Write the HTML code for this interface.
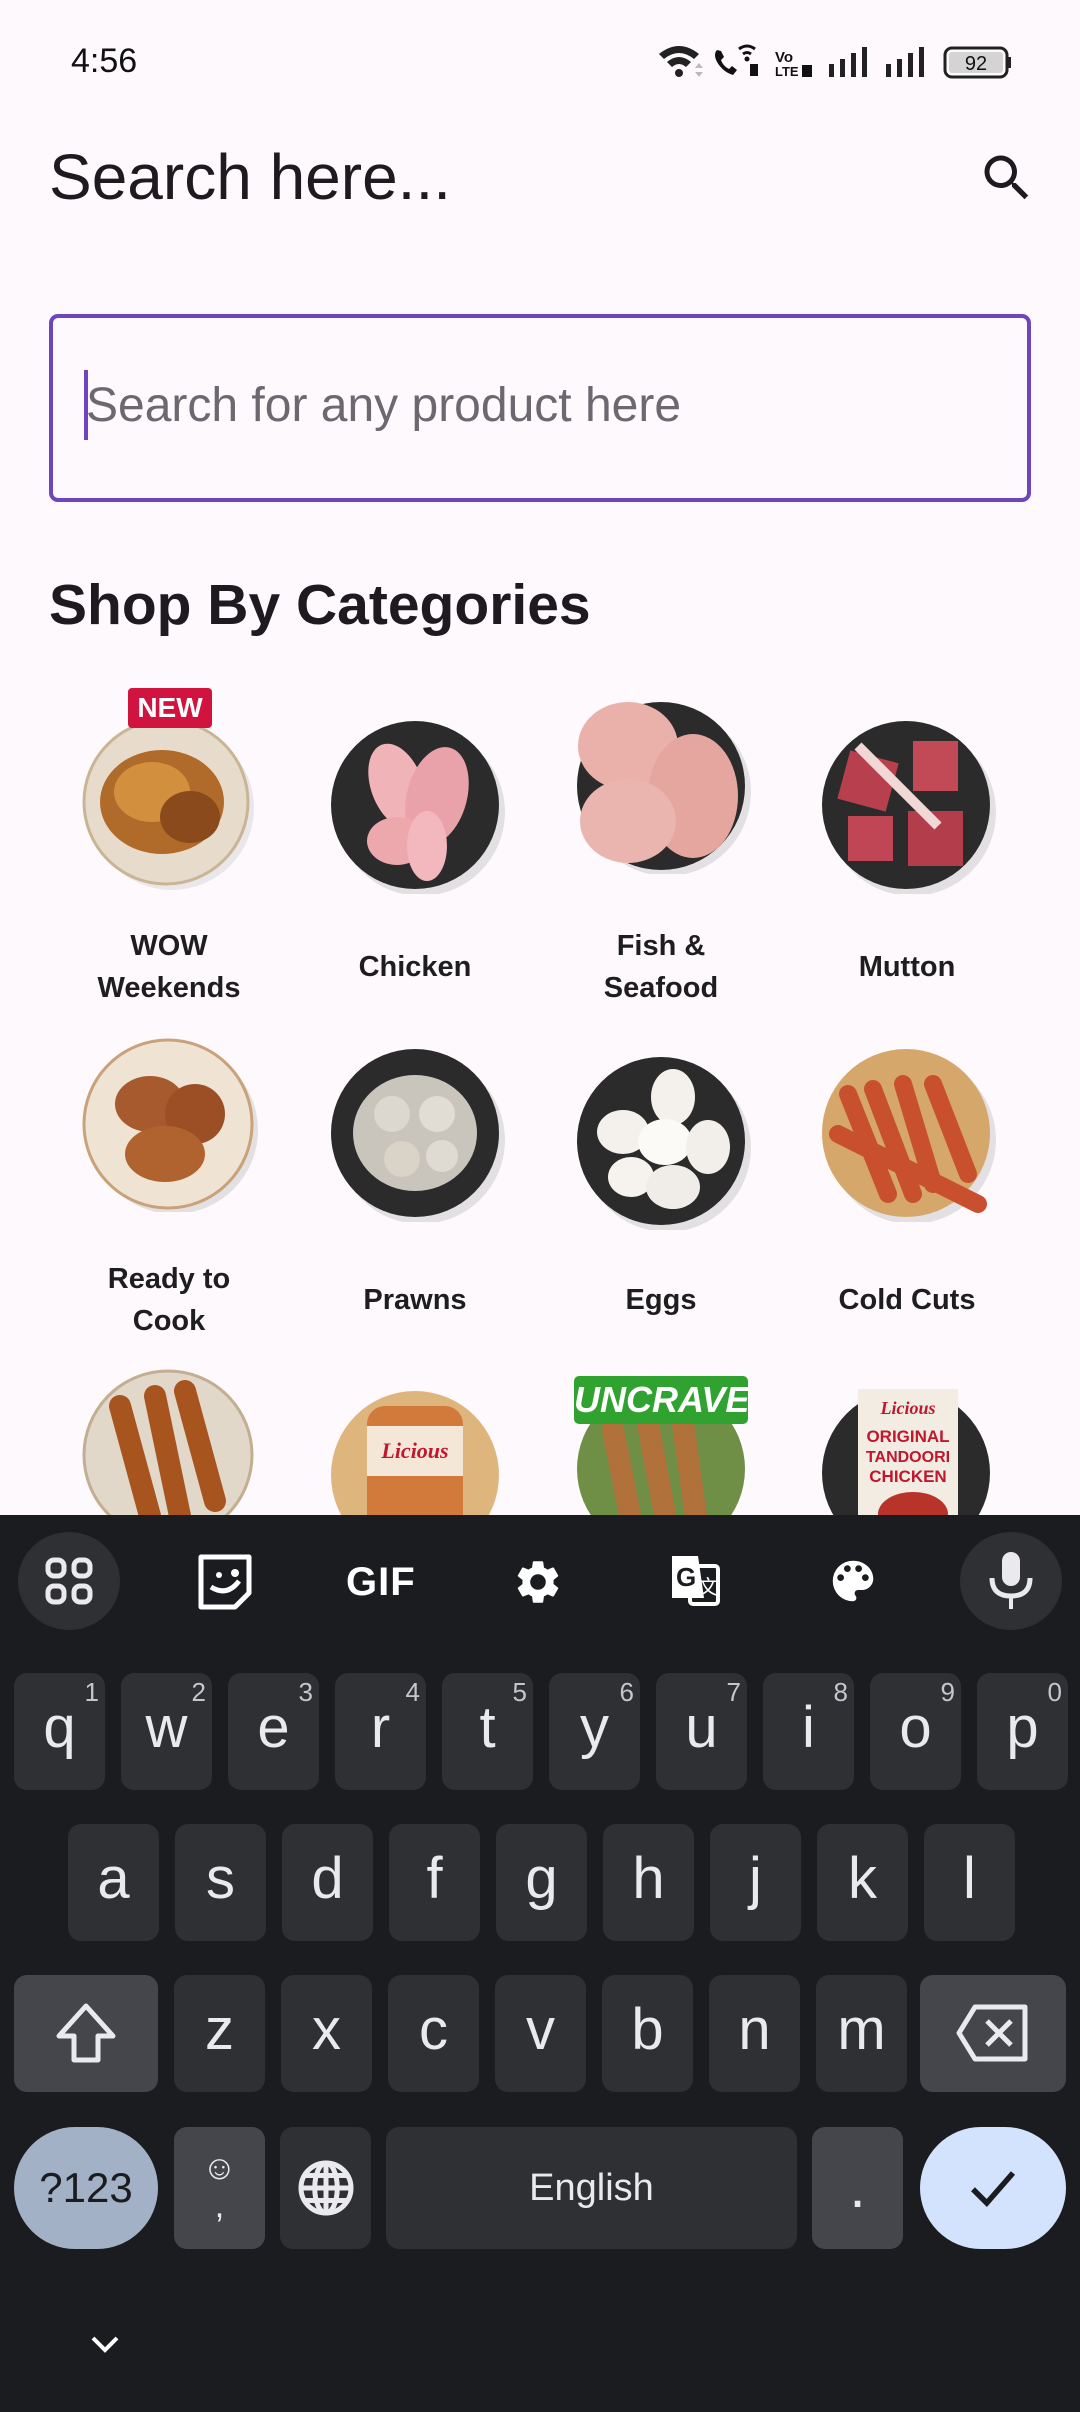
<!DOCTYPE html>
<html><head><meta charset="utf-8"><style>
*{margin:0;padding:0;box-sizing:border-box}
body{width:1080px;height:2412px;background:#fef9fd;font-family:"Liberation Sans",sans-serif;position:relative;overflow:hidden}
.a{position:absolute}
.lbl{position:absolute;width:246px;text-align:center;font-weight:bold;font-size:29px;color:#1e1e1e;line-height:42px}
.plate{position:absolute;width:178px;height:178px}
.kb{position:absolute;left:0;top:1515px;width:1080px;height:897px;background:#1b1c1f}
.k{position:absolute;background:#2f3034;border-radius:13px;color:#e9e9ee;font-size:58px;text-align:center;line-height:110px;height:117px;width:91px}
.k sup{position:absolute;right:6px;top:4px;font-size:26px;line-height:30px;color:#c4c6cc}
.d{background:#45464b}
</style></head><body>
<!-- status bar -->
<div class="a" style="left:71px;top:42px;font-size:34px;color:#111">4:56</div>
<svg class="a" style="left:655px;top:40px" width="360" height="42" viewBox="0 0 360 42">
<path d="M4 14 Q24 -2 44 14 L39 19 Q24 7 9 19Z M12 22 Q24 12 36 22 L31 27 Q24 21 17 27Z" fill="#222"/><circle cx="24" cy="33" r="4" fill="#222"/>
<path d="M40 28 l4-5 l4 5z M40 32 l4 5 l4-5z" fill="#bbb"/>
<path d="M62 10 q-4 4 0 12 q6 10 16 13 l4-5 l-5-4 l-3 3 q-6-3-8-9 l3-3 l-3-6z" fill="#111"/>
<path d="M84 9 q8-6 16 0 M88 14 q4-3 8 0" stroke="#111" stroke-width="3" fill="none"/><circle cx="92" cy="19" r="2.5" fill="#111"/>
<rect x="95" y="24" width="8" height="12" fill="#111"/>
<text x="120" y="22" font-size="15" font-weight="bold" fill="#111" font-family="Liberation Sans">Vo</text>
<text x="120" y="36" font-size="13" font-weight="bold" fill="#111" font-family="Liberation Sans">LTE</text>
<rect x="147" y="25" width="10" height="12" fill="#111"/>
<rect x="174" y="24" width="5" height="13" fill="#222"/><rect x="185" y="19" width="5" height="18" fill="#222"/><rect x="196" y="13" width="5" height="24" fill="#222"/><rect x="207" y="7" width="5" height="30" fill="#222"/>
<rect x="231" y="24" width="5" height="13" fill="#222"/><rect x="242" y="19" width="5" height="18" fill="#222"/><rect x="253" y="13" width="5" height="24" fill="#222"/><rect x="264" y="7" width="5" height="30" fill="#222"/>
<rect x="290" y="8" width="62" height="29" rx="7" fill="none" stroke="#222" stroke-width="3"/><rect x="294" y="12" width="54" height="21" rx="3" fill="#d4d4d4"/>
<text x="321" y="30" font-size="20" fill="#111" text-anchor="middle" font-family="Liberation Sans">92</text><rect x="353" y="17" width="3" height="11" fill="#222"/>
</svg>
<!-- header -->
<div class="a" style="left:49px;top:140px;font-size:64px;color:#1d1b20">Search here...</div>
<svg class="a" style="left:977px;top:148px" width="60" height="60" viewBox="0 0 24 24"><path fill="#1d1b20" d="M15.5 14h-.79l-.28-.27A6.47 6.47 0 0016 9.5 6.5 6.5 0 109.5 16c1.61 0 3.09-.59 4.23-1.57l.27.28v.79l5 4.99L20.49 19l-4.99-5zm-6 0C7.01 14 5 11.99 5 9.5S7.01 5 9.5 5 14 7.01 14 9.5 11.99 14 9.5 14z"/></svg>
<div class="a" style="left:49px;top:314px;width:982px;height:188px;border:4px solid #6f45bd;border-radius:9px"></div>
<div class="a" style="left:84px;top:370px;width:4px;height:70px;background:#6f45bd"></div>
<div class="a" style="left:86px;top:378px;font-size:48px;color:#6b6870">Search for any product here</div>
<div class="a" style="left:49px;top:572px;font-size:57px;font-weight:bold;color:#1d1b20">Shop By Categories</div>
<!-- row1 -->
<svg class="plate" style="left:80px;top:712px" viewBox="0 0 178 178"><ellipse cx="92" cy="96" rx="82" ry="82" fill="#ccc" opacity=".4"/><circle cx="86" cy="90" r="82" fill="#e7dccb" stroke="#c9b595" stroke-width="3"/><ellipse cx="82" cy="90" rx="62" ry="52" fill="#b06a2a"/><ellipse cx="72" cy="80" rx="38" ry="30" fill="#d2903e"/><ellipse cx="110" cy="105" rx="30" ry="26" fill="#8a4a1c"/></svg>
<div class="a" style="left:128px;top:688px;width:84px;height:40px;background:#d0143f;border-radius:4px;color:#fff;font-weight:bold;font-size:28px;text-align:center;line-height:40px">NEW</div>
<svg class="plate" style="left:327px;top:716px" viewBox="0 0 178 178"><circle cx="94" cy="96" r="84" fill="#bbb" opacity=".4"/><circle cx="88" cy="89" r="84" fill="#2b2b2b"/><ellipse cx="70" cy="70" rx="26" ry="44" fill="#f0b3b8" transform="rotate(-20 70 70)"/><ellipse cx="110" cy="80" rx="30" ry="50" fill="#e9a2aa" transform="rotate(15 110 80)"/><ellipse cx="70" cy="125" rx="30" ry="24" fill="#eda8ae"/><ellipse cx="100" cy="130" rx="20" ry="35" fill="#f2b8bd"/></svg>
<svg class="plate" style="left:573px;top:696px" viewBox="0 0 178 178"><circle cx="94" cy="96" r="84" fill="#bbb" opacity=".4"/><circle cx="88" cy="90" r="84" fill="#2b2b2b"/><ellipse cx="55" cy="50" rx="50" ry="44" fill="#e9b1aa"/><ellipse cx="120" cy="100" rx="45" ry="62" fill="#e5a69f"/><ellipse cx="55" cy="125" rx="48" ry="42" fill="#eab5ae"/></svg>
<svg class="plate" style="left:818px;top:716px" viewBox="0 0 178 178"><circle cx="94" cy="96" r="84" fill="#bbb" opacity=".4"/><circle cx="88" cy="89" r="84" fill="#2b2b2b"/><rect x="25" y="40" width="50" height="50" fill="#b8404e" transform="rotate(15 50 65)"/><rect x="95" y="25" width="45" height="50" fill="#c24a57"/><rect x="30" y="100" width="45" height="45" fill="#c04655"/><rect x="90" y="95" width="55" height="55" fill="#b33d4b"/><path d="M40 30 L120 110" stroke="#f1d7d5" stroke-width="10"/></svg>
<div class="lbl" style="left:46px;top:925px">WOW<br>Weekends</div>
<div class="lbl" style="left:292px;top:946px">Chicken</div>
<div class="lbl" style="left:538px;top:925px">Fish &amp;<br>Seafood</div>
<div class="lbl" style="left:784px;top:946px">Mutton</div>
<!-- row2 -->
<svg class="plate" style="left:80px;top:1034px" viewBox="0 0 178 178"><circle cx="94" cy="96" r="84" fill="#bbb" opacity=".4"/><circle cx="88" cy="90" r="84" fill="#efe3d3" stroke="#c9a27a" stroke-width="3"/><ellipse cx="70" cy="70" rx="35" ry="28" fill="#a65a2e"/><ellipse cx="115" cy="80" rx="30" ry="30" fill="#9c4f25"/><ellipse cx="85" cy="120" rx="40" ry="28" fill="#b0622f"/></svg>
<svg class="plate" style="left:327px;top:1044px" viewBox="0 0 178 178"><circle cx="94" cy="96" r="84" fill="#bbb" opacity=".4"/><circle cx="88" cy="89" r="84" fill="#2b2b2b"/><ellipse cx="88" cy="89" rx="62" ry="58" fill="#c9c5bd"/><circle cx="65" cy="70" r="18" fill="#ddd8cf"/><circle cx="110" cy="70" r="18" fill="#e2ddd4"/><circle cx="75" cy="115" r="18" fill="#d9d3c8"/><circle cx="115" cy="112" r="16" fill="#e0dbd2"/></svg>
<svg class="plate" style="left:573px;top:1052px" viewBox="0 0 178 178"><circle cx="94" cy="96" r="84" fill="#bbb" opacity=".4"/><circle cx="88" cy="89" r="84" fill="#2b2b2b"/><ellipse cx="100" cy="45" rx="22" ry="28" fill="#f4f1ec"/><ellipse cx="50" cy="80" rx="26" ry="22" fill="#f4f1ec"/><ellipse cx="92" cy="90" rx="27" ry="23" fill="#fbfaf7"/><ellipse cx="135" cy="95" rx="22" ry="27" fill="#f2efea"/><ellipse cx="58" cy="125" rx="23" ry="20" fill="#f6f3ee"/><ellipse cx="100" cy="135" rx="27" ry="22" fill="#f0ede8"/></svg>
<svg class="plate" style="left:818px;top:1044px" viewBox="0 0 178 178"><circle cx="94" cy="96" r="84" fill="#bbb" opacity=".4"/><circle cx="88" cy="89" r="84" fill="#d6a76a"/><g stroke="#c9502e" stroke-width="18" stroke-linecap="round"><path d="M30 50 L70 150"/><path d="M55 45 L95 150"/><path d="M85 40 L115 140"/><path d="M115 40 L150 130"/><path d="M20 90 L160 160"/></g></svg>
<div class="lbl" style="left:46px;top:1258px">Ready to<br>Cook</div>
<div class="lbl" style="left:292px;top:1279px">Prawns</div>
<div class="lbl" style="left:538px;top:1279px">Eggs</div>
<div class="lbl" style="left:784px;top:1279px">Cold Cuts</div>
<!-- row3 -->
<svg class="plate" style="left:80px;top:1366px" viewBox="0 0 178 178"><circle cx="88" cy="89" r="84" fill="#e2d8c9" stroke="#c2ae90" stroke-width="3"/><g stroke="#a8541f" stroke-width="22" stroke-linecap="round"><path d="M40 40 L70 150"/><path d="M75 30 L100 150"/><path d="M105 25 L135 135"/></g></svg>
<svg class="plate" style="left:327px;top:1386px" viewBox="0 0 178 178"><circle cx="88" cy="89" r="84" fill="#dfb57e"/><rect x="40" y="20" width="96" height="140" rx="18" fill="#d27a3c"/><rect x="40" y="40" width="96" height="50" fill="#f5e7d8"/><text x="88" y="72" font-size="22" font-style="italic" font-weight="bold" fill="#c0172e" text-anchor="middle" font-family="Liberation Serif">Licious</text></svg>
<svg class="plate" style="left:573px;top:1380px" viewBox="0 0 178 178"><circle cx="88" cy="89" r="84" fill="#6e8f45"/><g stroke="#b0713a" stroke-width="22" stroke-linecap="round"><path d="M40 50 L60 150"/><path d="M75 45 L95 150"/><path d="M110 45 L125 150"/></g></svg>
<div class="a" style="left:574px;top:1376px;width:174px;height:48px;background:#2fa22f;border-radius:5px;color:#fff;font-weight:bold;font-size:36px;text-align:center;line-height:48px;font-style:italic">UNCRAVE</div>
<svg class="plate" style="left:818px;top:1384px" viewBox="0 0 178 178"><circle cx="88" cy="89" r="84" fill="#2b2b2b"/><rect x="40" y="5" width="100" height="160" fill="#f2ece2"/><text x="90" y="30" font-size="18" font-style="italic" font-weight="bold" fill="#c0172e" text-anchor="middle" font-family="Liberation Serif">Licious</text><text x="90" y="58" font-size="17" font-weight="bold" fill="#c0172e" text-anchor="middle">ORIGINAL</text><text x="90" y="78" font-size="16" font-weight="bold" fill="#c0172e" text-anchor="middle">TANDOORI</text><text x="90" y="98" font-size="17" font-weight="bold" fill="#c0172e" text-anchor="middle">CHICKEN</text><ellipse cx="95" cy="130" rx="35" ry="22" fill="#b8342b"/></svg>
<!-- keyboard -->
<div class="kb"></div>
<div class="a" style="left:18px;top:1532px;width:102px;height:98px;border-radius:50%;background:#2f3034"></div>
<div class="a" style="left:960px;top:1532px;width:102px;height:98px;border-radius:50%;background:#2f3034"></div>
<svg class="a" style="left:44px;top:1556px" width="50" height="50" viewBox="0 0 50 50" fill="none" stroke="#e9e9ee" stroke-width="5"><rect x="4" y="4" width="16" height="16" rx="6"/><rect x="30" y="4" width="16" height="16" rx="6"/><rect x="4" y="30" width="16" height="16" rx="6"/><rect x="30" y="30" width="16" height="16" rx="6"/></svg>
<svg class="a" style="left:197px;top:1553px" width="56" height="58" viewBox="0 0 56 58"><path d="M4 4 H52 V40 L38 54 H4 Z" fill="none" stroke="#fff" stroke-width="5" stroke-linejoin="round"/><circle cx="38" cy="20" r="4" fill="#fff"/><circle cx="22" cy="22" r="3" fill="#fff"/><path d="M14 34 Q30 44 42 28" stroke="#fff" stroke-width="5" fill="none"/></svg>
<div class="a" style="left:346px;top:1560px;font-size:40px;font-weight:900;color:#fff;letter-spacing:1px">GIF</div>
<svg class="a" style="left:512px;top:1556px" width="52" height="52" viewBox="0 0 24 24"><path fill="#fff" d="M19.14 12.94c.04-.3.06-.61.06-.94 0-.32-.02-.64-.07-.94l2.03-1.58a.49.49 0 00.12-.61l-1.92-3.32a.49.49 0 00-.59-.22l-2.39.96c-.5-.38-1.03-.7-1.62-.94l-.36-2.54a.48.48 0 00-.48-.41h-3.84c-.24 0-.43.17-.47.41l-.36 2.54c-.59.24-1.13.57-1.62.94l-2.39-.96a.49.49 0 00-.59.22L2.74 8.87c-.12.21-.08.47.12.61l2.03 1.58c-.05.3-.09.63-.09.94s.02.64.07.94l-2.03 1.58a.49.49 0 00-.12.61l1.92 3.32c.12.22.37.29.59.22l2.39-.96c.5.38 1.03.7 1.62.94l.36 2.54c.05.24.24.41.48.41h3.84c.24 0 .44-.17.47-.41l.36-2.54c.59-.24 1.13-.56 1.62-.94l2.39.96c.22.08.47 0 .59-.22l1.92-3.32c.12-.22.07-.47-.12-.61l-2.01-1.58zM12 15.6A3.6 3.6 0 1112 8.4a3.6 3.6 0 010 7.2z"/></svg>
<svg class="a" style="left:668px;top:1552px" width="56" height="58" viewBox="0 0 56 58"><path d="M4 4 H30 L36 46 H4Z" fill="#fff"/><rect x="22" y="14" width="28" height="38" rx="3" fill="none" stroke="#fff" stroke-width="4"/><text x="8" y="34" font-size="26" font-weight="bold" fill="#1b1c1f" font-family="Liberation Sans">G</text><text x="30" y="42" font-size="20" fill="#fff" font-family="Liberation Sans">文</text></svg>
<svg class="a" style="left:826px;top:1554px" width="54" height="54" viewBox="0 0 24 24"><path fill="#fff" d="M12 3a9 9 0 000 18c.83 0 1.5-.67 1.5-1.5 0-.39-.15-.74-.39-1.01-.23-.26-.38-.61-.38-.99 0-.83.67-1.5 1.5-1.5H16c2.76 0 5-2.24 5-5 0-4.42-4.03-8-9-8zm-5.5 9a1.5 1.5 0 110-3 1.5 1.5 0 010 3zm3-4a1.5 1.5 0 110-3 1.5 1.5 0 010 3zm5 0a1.5 1.5 0 110-3 1.5 1.5 0 010 3zm3 4a1.5 1.5 0 110-3 1.5 1.5 0 010 3z"/></svg>
<svg class="a" style="left:982px;top:1550px" width="58" height="62" viewBox="0 0 58 62"><rect x="20" y="2" width="18" height="34" rx="9" fill="#e9e9ee"/><path d="M10 28 Q10 46 29 46 Q48 46 48 28" stroke="#e9e9ee" stroke-width="5" fill="none"/><rect x="27" y="45" width="4" height="14" fill="#e9e9ee"/></svg>
<!-- row1 keys -->
<div class="k" style="left:14px;top:1673px">q<sup>1</sup></div>
<div class="k" style="left:121px;top:1673px">w<sup>2</sup></div>
<div class="k" style="left:228px;top:1673px">e<sup>3</sup></div>
<div class="k" style="left:335px;top:1673px">r<sup>4</sup></div>
<div class="k" style="left:442px;top:1673px">t<sup>5</sup></div>
<div class="k" style="left:549px;top:1673px">y<sup>6</sup></div>
<div class="k" style="left:656px;top:1673px">u<sup>7</sup></div>
<div class="k" style="left:763px;top:1673px">i<sup>8</sup></div>
<div class="k" style="left:870px;top:1673px">o<sup>9</sup></div>
<div class="k" style="left:977px;top:1673px">p<sup>0</sup></div>
<!-- row2 -->
<div class="k" style="left:68px;top:1824px">a</div>
<div class="k" style="left:175px;top:1824px">s</div>
<div class="k" style="left:282px;top:1824px">d</div>
<div class="k" style="left:389px;top:1824px">f</div>
<div class="k" style="left:496px;top:1824px">g</div>
<div class="k" style="left:603px;top:1824px">h</div>
<div class="k" style="left:710px;top:1824px">j</div>
<div class="k" style="left:817px;top:1824px">k</div>
<div class="k" style="left:924px;top:1824px">l</div>
<!-- row3 -->
<div class="k d" style="left:14px;top:1975px;width:144px"><svg width="70" height="70" viewBox="0 0 70 70" style="margin-top:23px"><path d="M35 8 L62 38 H47 V62 H23 V38 H8 Z" fill="none" stroke="#e9e9ee" stroke-width="5" stroke-linejoin="round"/></svg></div>
<div class="k" style="left:174px;top:1975px">z</div>
<div class="k" style="left:281px;top:1975px">x</div>
<div class="k" style="left:388px;top:1975px">c</div>
<div class="k" style="left:495px;top:1975px">v</div>
<div class="k" style="left:602px;top:1975px">b</div>
<div class="k" style="left:709px;top:1975px">n</div>
<div class="k" style="left:816px;top:1975px">m</div>
<div class="k d" style="left:920px;top:1975px;width:146px"><svg width="76" height="60" viewBox="0 0 76 60" style="margin-top:28px"><path d="M20 4 H70 V56 H20 L4 30 Z" fill="none" stroke="#e9e9ee" stroke-width="5" stroke-linejoin="round"/><path d="M32 18 L56 42 M56 18 L32 42" stroke="#e9e9ee" stroke-width="5"/></svg></div>
<!-- row4 -->
<div class="k" style="left:14px;top:2127px;width:144px;height:122px;border-radius:61px/61px;background:#a3b1c6;color:#1b1c1f;font-size:42px;line-height:122px">?123</div>
<div class="k d" style="left:174px;top:2127px;height:122px;font-size:34px;line-height:38px;padding-top:22px">☺<br>,</div>
<div class="k" style="left:280px;top:2127px;height:122px"><svg width="60" height="60" viewBox="0 0 24 24" style="margin-top:31px"><g fill="none" stroke="#e9e9ee" stroke-width="2"><circle cx="12" cy="12" r="10"/><ellipse cx="12" cy="12" rx="4.5" ry="10"/><path d="M2 12h20M4 7h16M4 17h16M12 2v20"/></g></svg></div>
<div class="k" style="left:386px;top:2127px;height:122px;width:411px;font-size:38px;line-height:122px">English</div>
<div class="k d" style="left:812px;top:2127px;height:122px;line-height:122px">.</div>
<div class="k" style="left:920px;top:2127px;width:146px;height:122px;border-radius:61px/61px;background:#d3e3fd"><svg width="60" height="60" viewBox="0 0 24 24" style="margin-top:31px"><path d="M4 12.5 L9.5 18 L20 6" fill="none" stroke="#1b1c1f" stroke-width="2.2"/></svg></div>
<svg class="a" style="left:88px;top:2332px" width="34" height="24" viewBox="0 0 34 24"><path d="M5 6 L17 18 L29 6" stroke="#fff" stroke-width="4" fill="none"/></svg>
</body></html>
